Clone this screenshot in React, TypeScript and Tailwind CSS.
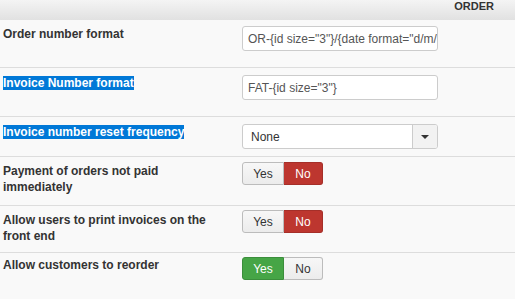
import React from "react";

function Label({ text, selected }: { text: string; selected?: boolean }) {
  if (selected) {
    return <span className="bg-[#0078d7] text-white">{text}</span>;
  }
  return <span>{text}</span>;
}

function Toggle({ value }: { value: "yes" | "no" }) {
  const yesCls =
    value === "yes"
      ? "bg-[#46a546] border-[#3b8e3b] text-white"
      : "bg-linear-to-b from-[#f7f7f7] to-[#ececec] border-[#bcbcbc] text-[#333]";
  const noCls =
    value === "no"
      ? "bg-[#bd362f] border-[#a52f29] text-white"
      : "bg-linear-to-b from-[#f7f7f7] to-[#ececec] border-[#bcbcbc] text-[#333]";
  return (
    <div className="flex">
      <span
        className={`w-[42px] h-[23px] flex items-center justify-center border rounded-l-[3px] ${yesCls}`}
      >
        Yes
      </span>
      <span
        className={`w-[39px] h-[23px] flex items-center justify-center border border-l-0 rounded-r-[3px] ${noCls}`}
      >
        No
      </span>
    </div>
  );
}

function TextInput({ value }: { value: string }) {
  return (
    <div className="w-[196px] h-[25px] bg-white border border-[#ccc] rounded-[3px] px-[5px] flex items-center overflow-hidden whitespace-nowrap text-[#555]">
      {value}
    </div>
  );
}

function Select({ value }: { value: string }) {
  return (
    <div className="w-[196px] h-[25px] bg-white border border-[#ccc] rounded-[3px] flex overflow-hidden text-[#333]">
      <div className="flex-1 flex items-center pl-[8px]">{value}</div>
      <div className="w-[25px] bg-[#f2f2f2] border-l border-[#ccc] flex items-center justify-center">
        <span className="w-0 h-0 border-l-[4px] border-r-[4px] border-t-[4px] border-l-transparent border-r-transparent border-t-[#333]" />
      </div>
    </div>
  );
}

const rows = [
  {
    label: "Order number format",
    h: "h-[47px]",
    pt: "pt-[6px]",
    ctrlPt: "pt-[6px]",
    control: <TextInput value={'OR-{id size="3"}/{date format="d/m/Y"}'} />,
  },
  {
    label: "Invoice Number format",
    selected: true,
    h: "h-[49px]",
    pt: "pt-[7px]",
    ctrlPt: "pt-[7px]",
    control: <TextInput value={'FAT-{id size="3"}'} />,
  },
  {
    label: "Invoice number reset frequency",
    selected: true,
    h: "h-[40px]",
    pt: "pt-[7px]",
    ctrlPt: "pt-[7px]",
    control: <Select value="None" />,
  },
  {
    label: "Payment of orders not paid immediately",
    h: "h-[49px]",
    pt: "pt-[6px]",
    ctrlPt: "pt-[5px]",
    control: <Toggle value="no" />,
  },
  {
    label: "Allow users to print invoices on the front end",
    h: "h-[47px]",
    pt: "pt-[6px]",
    ctrlPt: "pt-[4px]",
    control: <Toggle value="no" />,
  },
  {
    label: "Allow customers to reorder",
    h: "h-[47px]",
    pt: "pt-[4px]",
    ctrlPt: "pt-[4px]",
    control: <Toggle value="yes" />,
  },
];

export default function App() {
  return (
    <div className="w-[515px] h-[299px] overflow-hidden bg-[#f9f9f9] font-['Liberation_Sans',Arial,sans-serif] text-[12px] leading-[16px] text-[#333]">
      <div className="h-[20px] bg-linear-to-b from-[#f4f4f4] to-[#e1e1e1] flex justify-end pr-[21px]">
        <span className="text-[11px] leading-[11px] font-bold pt-[1px]">ORDER</span>
      </div>
      {rows.map((r, i) => (
        <div
          key={r.label}
          className={`flex ${r.h} ${i > 0 ? "border-t border-[#dddddd]" : ""}`}
        >
          <div className={`w-[242px] pl-[3px] pr-[30px] font-bold ${r.pt}`}>
            <Label text={r.label} selected={r.selected} />
          </div>
          <div className={r.ctrlPt}>{r.control}</div>
        </div>
      ))}
    </div>
  );
}
